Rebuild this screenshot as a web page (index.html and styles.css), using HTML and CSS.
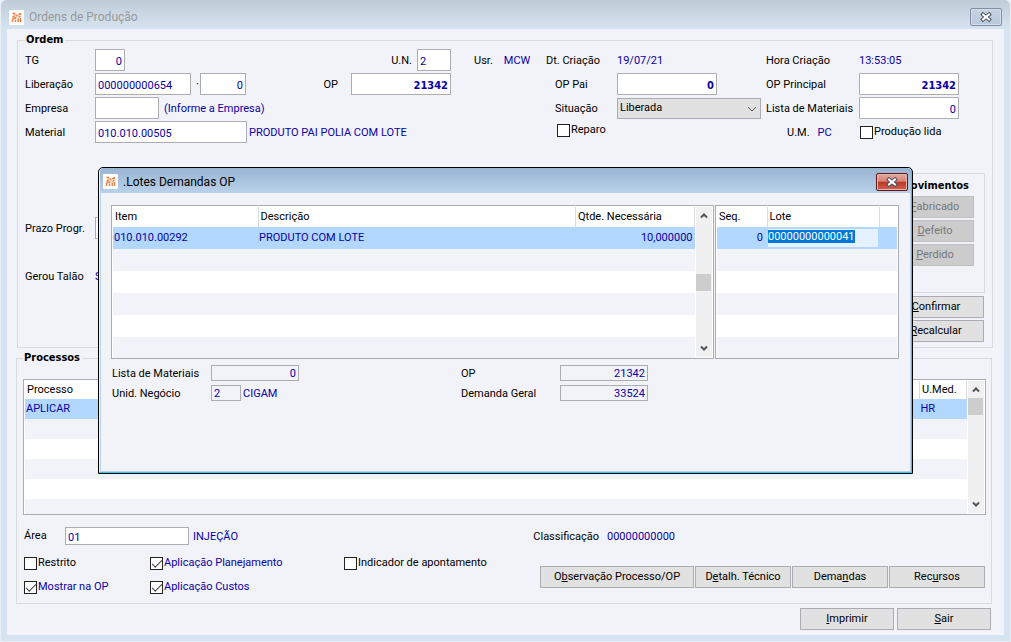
FILE: index.html
```html
<!DOCTYPE html>
<html lang="pt-BR">
<head>
    <meta charset="UTF-8" />
    <meta name="viewport" content="width=device-width, initial-scale=1.0" />
    <title>Ordens de Produção</title>
    <link rel="stylesheet" href="styles.css">
</head>
<body>
    <svg width="0" height="0" class="sprite" aria-hidden="true">
        <symbol id="logo" viewBox="0 0 15 15">
            <rect width="15" height="15" rx="1" fill="#fff" />
            <g fill="none" stroke="#f4793b" stroke-width="1.4">
                <path d="M3.500 3.500h2v1M3.500 7.500L5.500 5.500M6.500 4.500L8.500 6.500M9 5l2.500-1.500M11.500 3v2M9.500 7.500l2-1.500" />
                <path d="M3.500 12V9.500L5.500 7.500L7.500 8.500M6.500 12V9.500M9.200 12V8.500M11.500 12V8" />
            </g>
        </symbol>
        <symbol id="close" viewBox="0 0 12 10">
            <path d="M3 2.500L9 7.500M9 2.500L3 7.500" stroke="#4a5060" stroke-width="4" stroke-linecap="square" />
            <path d="M3 2.500L9 7.500M9 2.500L3 7.500" stroke="#fff" stroke-width="2" stroke-linecap="square" />
        </symbol>
        <symbol id="up" viewBox="0 0 8 6">
            <path d="M1 4.500L4 1.500L7 4.500" fill="none" stroke="#555" stroke-width="2" />
        </symbol>
        <symbol id="down" viewBox="0 0 8 6">
            <path d="M1 1.500L4 4.500L7 1.500" fill="none" stroke="#555" stroke-width="2" />
        </symbol>
    </svg>

    <main class="window">
        <header class="titlebar">
            <svg class="logo"><use href="#logo" /></svg>
            <h1>Ordens de Produção</h1>
            <button class="close" aria-label="Fechar"><svg><use href="#close" /></svg></button>
        </header>

        <div class="content">
            <fieldset class="ordem">
                <legend>Ordem</legend>
                <div class="form-grid">
                    <label for="tg">TG</label>
                    <div class="line">
                        <input id="tg" class="num w-30" value="0">
                        <label for="un" class="push">U.N.</label>
                        <input id="un" class="w-34" value="2">
                    </div>
                    <div class="line user"><span>Usr.</span><output>MCW</output></div>
                    <span>Dt. Criação</span>
                    <output>19/07/21</output>
                    <span>Hora Criação</span>
                    <output>13:53:05</output>

                    <label for="liberacao">Liberação</label>
                    <div class="line">
                        <input id="liberacao" class="w-96" value="000000000654">
                        <span class="dot">·</span>
                        <input class="num w-46" value="0" aria-label="Sequência">
                        <label for="op" class="push wide">OP</label>
                        <input id="op" class="num strong w-100" value="21342">
                    </div>
                    <span></span>
                    <label for="op-pai" class="indent">OP Pai</label>
                    <input id="op-pai" class="num strong w-100" value="0">
                    <label for="op-principal">OP Principal</label>
                    <input id="op-principal" class="num strong w-100" value="21342">

                    <label for="empresa">Empresa</label>
                    <div class="line">
                        <input id="empresa" class="w-64">
                        <output>(Informe a Empresa)</output>
                    </div>
                    <span></span>
                    <label for="situacao" class="indent">Situação</label>
                    <div class="select">
                        <select id="situacao"><option>Liberada</option></select>
                        <svg viewBox="0 0 10 6"><path d="M1 1l4 4l4-4" fill="none" stroke="#555" /></svg>
                    </div>
                    <label for="lista">Lista de Materiais</label>
                    <input id="lista" class="num w-100" value="0">

                    <label for="material">Material</label>
                    <div class="line tight">
                        <input id="material" class="w-152" value="010.010.00505">
                        <output>PRODUTO PAI POLIA COM LOTE</output>
                    </div>
                    <span></span>
                    <label class="check reparo"><input type="checkbox">Reparo</label>
                    <span></span>
                    <div class="line unit"><span>U.M.</span><output>PC</output></div>
                    <label class="check lida"><input type="checkbox">Produção lida</label>
                </div>

                <div class="lower">
                    <div class="prazo">
                        <label for="prazo">Prazo Progr.</label>
                        <input id="prazo" class="w-96">
                        <span>Gerou Talão</span>
                        <output>S</output>
                    </div>
                    <div class="side">
                        <section class="movimentos">
                            <h2>Movimentos</h2>
                            <button disabled><u>F</u>abricado</button>
                            <button disabled><u>D</u>efeito</button>
                            <button disabled><u>P</u>erdido</button>
                        </section>
                        <button><u>C</u>onfirmar</button>
                        <button><u>R</u>ecalcular</button>
                    </div>
                </div>
            </fieldset>

            <fieldset class="processos">
                <legend>Processos</legend>
                <div class="grid-box">
                    <table>
                        <thead>
                            <tr><th>Processo</th><th class="col-umed">U.Med.</th></tr>
                        </thead>
                        <tbody>
                            <tr class="selected"><td>APLICAR</td><td>HR</td></tr>
                            <tr><td></td><td></td></tr>
                            <tr><td></td><td></td></tr>
                            <tr><td></td><td></td></tr>
                            <tr><td></td><td></td></tr>
                            <tr><td></td><td></td></tr>
                        </tbody>
                    </table>
                    <div class="scrollbar top">
                        <svg><use href="#up" /></svg>
                        <i class="thumb"></i>
                        <svg><use href="#down" /></svg>
                    </div>
                </div>

                <div class="area">
                    <label for="area">Área</label>
                    <input id="area" class="w-124" value="01">
                    <output>INJEÇÃO</output>
                    <span>Classificação</span>
                    <output>00000000000</output>
                </div>

                <div class="options">
                    <div class="checks">
                        <label class="check"><input type="checkbox">Restrito</label>
                        <label class="check on"><input type="checkbox" checked>Aplicação Planejamento</label>
                        <label class="check"><input type="checkbox">Indicador de apontamento</label>
                        <label class="check on"><input type="checkbox" checked>Mostrar na OP</label>
                        <label class="check on"><input type="checkbox" checked>Aplicação Custos</label>
                    </div>
                    <div class="actions">
                        <button class="long">O<u>b</u>servação Processo/OP</button>
                        <button>D<u>e</u>talh. Técnico</button>
                        <button>Dema<u>n</u>das</button>
                        <button>Rec<u>u</u>rsos</button>
                    </div>
                </div>
            </fieldset>

            <footer class="footer">
                <button><u>I</u>mprimir</button>
                <button><u>S</u>air</button>
            </footer>
        </div>
    </main>

    <section class="dialog" role="dialog" aria-labelledby="dialog-title">
        <header class="titlebar">
            <svg class="logo"><use href="#logo" /></svg>
            <h1 id="dialog-title">.Lotes Demandas OP</h1>
            <button class="close" aria-label="Fechar"><svg><use href="#close" /></svg></button>
        </header>
        <div class="dialog-body">
            <div class="tables">
                <div class="grid-box items">
                    <table>
                        <thead>
                            <tr><th class="col-item">Item</th><th>Descrição</th><th class="col-qtde">Qtde. Necessária</th></tr>
                        </thead>
                        <tbody>
                            <tr class="selected"><td>010.010.00292</td><td>PRODUTO COM LOTE</td><td class="num">10,000000</td></tr>
                            <tr><td></td><td></td><td></td></tr>
                            <tr><td></td><td></td><td></td></tr>
                            <tr><td></td><td></td><td></td></tr>
                            <tr><td></td><td></td><td></td></tr>
                            <tr><td></td><td></td><td></td></tr>
                        </tbody>
                    </table>
                    <div class="scrollbar middle">
                        <svg><use href="#up" /></svg>
                        <i class="thumb"></i>
                        <svg><use href="#down" /></svg>
                    </div>
                </div>
                <div class="grid-box lotes">
                    <table>
                        <thead>
                            <tr><th class="col-seq">Seq.</th><th class="col-lote">Lote</th><th></th></tr>
                        </thead>
                        <tbody>
                            <tr class="selected"><td class="num">0</td><td class="edit"><input id="lote" value="00000000000041" aria-label="Lote"></td><td></td></tr>
                            <tr><td></td><td></td><td></td></tr>
                            <tr><td></td><td></td><td></td></tr>
                            <tr><td></td><td></td><td></td></tr>
                            <tr><td></td><td></td><td></td></tr>
                            <tr><td></td><td></td><td></td></tr>
                        </tbody>
                    </table>
                </div>
            </div>
            <div class="summary">
                <label for="d-lista">Lista de Materiais</label>
                <input id="d-lista" class="num w-88" value="0" readonly>
                <label for="d-op">OP</label>
                <input id="d-op" class="num w-88" value="21342" readonly>
                <label for="d-unid">Unid. Negócio</label>
                <div class="line tight">
                    <input id="d-unid" class="w-30" value="2" readonly>
                    <output>CIGAM</output>
                </div>
                <label for="d-geral">Demanda Geral</label>
                <input id="d-geral" class="num w-88" value="33524" readonly>
            </div>
        </div>
    </section>

    <script>
        const lote = document.querySelector('#lote');
        lote.focus();
        lote.select();
    </script>
</body>
</html>
```
FILE: styles.css
```css
:root {
    --face: #f2f3f9;
    --frame: #d6e4f1;
    --line: #d8dade;
    --field-line: #abadb3;
    --blue: #0a00a8;
    --selected: #b2d8ff;
    --text-font: Roboto, Tahoma, sans-serif;
    --bold-font: "DejaVu Sans Condensed", Tahoma, sans-serif;
}

* {
    margin: 0;
    padding: 0;
    box-sizing: border-box;
}

body {
    background: #e8eff7;
    color: #000;
    font: 11px/14px var(--text-font);
    white-space: nowrap;
}

.sprite {
    position: absolute;
}

/* window frame */
.window {
    min-height: 100vh;
    padding: 0 6px 6px;
    border-left: 1px solid #e8eff7;
    border-right: 1px solid #e8eff7;
    border-bottom: 1px solid #e8eff7;
    border-radius: 6px 6px 0 0;
    background: var(--frame);
}

.titlebar {
    display: flex;
    align-items: center;
    gap: 5px;
}

.titlebar h1 {
    font-size: 12px;
    font-weight: normal;
    line-height: 16px;
}

.window > .titlebar {
    height: 29px;
    margin: 0 -6px;
    padding: 5px 8px 0;
    background: linear-gradient(#bfccd8, #d6e4f1);
    border-radius: 6px 6px 0 0;
}

.window > .titlebar h1 {
    color: #999;
}

.logo {
    width: 15px;
    height: 15px;
}

.close {
    display: grid;
    place-items: center;
    width: 32px;
    height: 18px;
    margin-left: auto;
    border: 1px solid #7f8da8;
    border-radius: 2px;
    background: linear-gradient(#c6d3e2, #b9c9dc);
    box-shadow: inset 0 0 0 1px #d4dfeb;
}

.close svg {
    width: 12px;
    height: 10px;
}

.content {
    padding: 4px 12px 5px 9px;
    background: var(--face);
}

/* fields */
fieldset {
    min-width: 0;
    border: 1px solid var(--line);
}

legend,
h2 {
    font: bold 11px/14px var(--bold-font);
}

legend {
    padding: 0 2px 0 1px;
}

output {
    color: var(--blue);
}

/* drops captions onto the baseline of the fields beside them */
.form-grid label:not(.check),
.form-grid span,
.prazo label,
.prazo span,
.summary label,
output {
    padding-top: 2px;
}

input,
select {
    height: 22px;
    padding: 2px 2px 0;
    border: 1px solid var(--field-line);
    background: #fff;
    color: var(--blue);
    font: inherit;
    outline: none;
}

.num {
    text-align: right;
}

.strong {
    font: bold 11px var(--bold-font);
}

.w-30 { width: 30px; }
.w-34 { width: 34px; }
.w-46 { width: 46px; }
.w-64 { width: 64px; }
.w-88 { width: 88px; }
.w-96 { width: 96px; }
.w-100 { width: 100px; }
.w-124 { width: 124px; }
.w-152 { width: 152px; }

.line {
    display: flex;
    align-items: center;
    gap: 5px;
}

.line.tight {
    gap: 2px;
}

.push {
    margin-left: auto;
}

.push.wide {
    padding-right: 8px;
}

.dot {
    width: 3px;
    margin-right: -4px;
}

.check {
    display: flex;
    align-items: center;
    gap: 1px;
}

.check input {
    position: relative;
    appearance: none;
    width: 13px;
    height: 13px;
    padding: 0;
    border: 1px solid #222;
}

.check input:checked::after {
    content: "";
    position: absolute;
    left: 1px;
    top: 2px;
    width: 9px;
    height: 4px;
    border: solid #444;
    border-width: 0 0 1px 1px;
    transform: rotate(-45deg);
}

.check.on {
    color: var(--blue);
}

.select {
    position: relative;
    width: 144px;
}

.select select {
    appearance: none;
    width: 100%;
    height: 21px;
    padding: 0 2px;
    background: #e1e1e1;
    color: #000;
}

.select svg {
    position: absolute;
    right: 4px;
    top: 8px;
    width: 10px;
    height: 6px;
}

button {
    height: 22px;
    border: 1px solid var(--field-line);
    background: #e1e1e1;
    color: #000;
    font: inherit;
}

button:disabled {
    border-color: #bfbfbf;
    background: #ccc;
    color: #777;
}

/* order */
.ordem {
    margin: 0 -1px 3px 1px;
    padding: 2px 7px 5px;
}

.form-grid {
    display: grid;
    grid-template-columns: 70px 356px 95px 71px 149px 93px 1fr;
    grid-auto-rows: 22px;
    row-gap: 2px;
    align-items: center;
}

.user {
    padding-left: 23px;
    gap: 11px;
}

.indent {
    padding-left: 9px;
}

.reparo {
    padding-left: 11px;
    padding-bottom: 4px;
}

.lida {
    padding-left: 1px;
}

.unit {
    padding-left: 21px;
    gap: 8px;
}

.lower {
    display: flex;
    justify-content: space-between;
    margin-top: 30px;
}

.prazo {
    display: grid;
    grid-template-columns: 70px 96px;
    grid-auto-rows: 22px;
    row-gap: 26px;
    align-items: center;
    align-content: start;
    padding-top: 44px;
}

.side {
    display: flex;
    flex-direction: column;
    gap: 2px;
    width: 97px;
}

.side > button {
    width: 96px;
}

.movimentos {
    display: flex;
    flex-direction: column;
    align-items: flex-end;
    gap: 2px;
    height: 120px;
    margin-bottom: 1px;
    padding: 5px 10px;
    border: 1px solid var(--line);
}

.movimentos h2 {
    padding: 0 5px 1px;
}

.movimentos button {
    width: 78px;
}

/* tables */
.grid-box {
    display: flex;
    padding: 1px;
    border: 1px solid var(--field-line);
    background: #fff;
    overflow: hidden;
}

table {
    flex: 1;
    width: 100%;
    border-collapse: collapse;
    table-layout: fixed;
}

th {
    height: 20px;
    padding-left: 2px;
    border-right: 1px solid #dcdcdc;
    font-weight: normal;
    text-align: left;
}

td {
    height: 22px;
    padding: 0 2px 0 1px;
    color: var(--blue);
}

tbody tr:nth-child(even) {
    background: var(--face);
}

tbody .selected {
    background: var(--selected);
}

.scrollbar {
    display: flex;
    flex: none;
    flex-direction: column;
    align-items: center;
    width: 16px;
    margin-left: 1px;
    padding: 6px 0;
    background: #f0f0f0;
}

.scrollbar svg {
    width: 8px;
    height: 6px;
}

.scrollbar svg:last-child {
    margin-top: auto;
}

.thumb {
    align-self: flex-start;
    width: 15px;
    height: 17px;
    background: #cdcdcd;
}

.scrollbar.top .thumb {
    margin-top: 5px;
}

.scrollbar.middle .thumb {
    margin-top: auto;
}

/* processes */
.processos {
    padding: 14px 5px 4px 6px;
}

.processos .grid-box {
    height: 136px;
}

.processos table {
    height: 138px;
}

.processos th {
    height: 18px;
}

.processos td {
    height: 20px;
}

.col-umed {
    width: 47px;
}

.area {
    display: flex;
    align-items: center;
    height: 36px;
    padding: 6px 1px 0;
}

.area label {
    width: 41px;
}

.area input {
    height: 18px;
    margin-right: 4px;
}

.area span {
    margin-left: auto;
    margin-right: 8px;
    padding-top: 2px;
}

.area output:last-child {
    width: 378px;
}

.options {
    display: flex;
    justify-content: space-between;
    align-items: center;
}

.checks {
    display: grid;
    grid-template-columns: 126px 194px auto;
    grid-auto-rows: 24px;
    padding-left: 1px;
}

.actions {
    display: flex;
    gap: 1px;
    padding: 4px 1px 0 0;
}

.actions button {
    width: 96px;
}

.actions .long {
    width: 154px;
}

.footer {
    display: flex;
    justify-content: flex-end;
    gap: 3px;
    padding: 4px 1px 0 0;
}

.footer button {
    width: 94px;
}

/* dialog */
.dialog {
    position: absolute;
    top: 167px;
    left: 0;
    right: 0;
    width: 815px;
    margin: 0 auto;
    padding: 0 1px 1px;
    border: 1px solid #000;
    border-radius: 5px 5px 0 0;
    background: #b9d1ea;
    box-shadow: inset -1px -1px #27d3f0, inset 1px 1px #eef4fa;
}

.dialog .titlebar {
    height: 25px;
    padding: 2px 3px 0;
    border-radius: 4px 4px 0 0;
    background: linear-gradient(#99b4d1, #b9d1ea);
}

.dialog .close {
    border-color: #5a1a1a;
    background: linear-gradient(#e6a59b, #d9867a 45%, #b93a26 50%, #d0614f);
    box-shadow: inset 0 0 0 1px #e9b5ae;
}

.dialog-body {
    min-height: 278px;
    margin: 0 1px 1px;
    padding: 12px 11px 10px 10px;
    background: var(--face);
}

.tables {
    display: flex;
    gap: 1px;
}

.tables .grid-box {
    height: 154px;
}

.items {
    flex: 1;
}

.lotes {
    width: 184px;
}

.col-item { width: 145px; }
.col-qtde { width: 119px; }
.col-seq { width: 50px; }
.col-lote { width: 112px; }

.lotes .num {
    padding-right: 4px;
}

.lotes th:last-child {
    border: none;
}

.edit input {
    display: block;
    width: 110px;
    height: 18px;
    padding: 0 0 3px;
    border: none;
    background: #e5f1ff;
    line-height: 14px;
}

.edit input::selection {
    background: #0078d7;
    color: #fff;
}

.summary {
    display: grid;
    grid-template-columns: 99px 250px 99px auto;
    grid-auto-rows: 16px;
    row-gap: 4px;
    align-items: center;
    margin-top: 6px;
    padding-left: 1px;
}

.summary input {
    height: 16px;
    padding-top: 1px;
    background: transparent;
}
```
